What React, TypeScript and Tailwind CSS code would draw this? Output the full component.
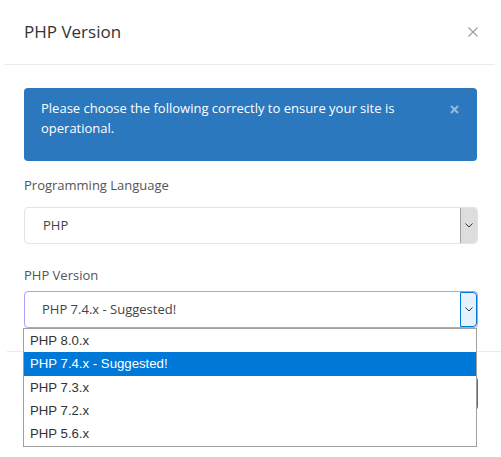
import React from "react";

const VERSIONS = ["PHP 8.0.x", "PHP 7.4.x - Suggested!", "PHP 7.3.x", "PHP 7.2.x", "PHP 5.6.x"];

function Chevron() {
  return (
    <svg width="8" height="5" viewBox="0 0 8 5" fill="none">
      <path d="M0.5 0.5 L4 4 L7.5 0.5" stroke="#333" strokeWidth="1" />
    </svg>
  );
}

export default function App() {
  return (
    <div className="relative h-[457px] w-[501px] overflow-hidden bg-white font-['Open_Sans',sans-serif]">
      <header className="ml-1 mr-[6px] flex h-[65px] items-center justify-between border-b border-[#e9ecef] pl-5 pr-[17px]">
        <h2 className="text-[17px] leading-[24px] text-[#333]">PHP Version</h2>
        <button type="button" className="flex h-[10px] w-[10px] items-center justify-center">
          <svg width="10" height="10" viewBox="0 0 10 10">
            <path d="M0.5 0.5 L9.5 9.5 M9.5 0.5 L0.5 9.5" stroke="#a0a0a0" strokeWidth="1.2" />
          </svg>
        </button>
      </header>

      <div className="px-6 pt-[23px]">
        <div className="flex h-[73px] items-start rounded-[4px] bg-[#2b78be] pl-[17px] pr-[18px] pt-[10px] text-[13px] leading-[20px] text-white">
          <p className="flex-1 pr-[30px]">
            Please choose the following correctly to ensure your site is operational.
          </p>
          <button type="button" className="mt-[7px] flex h-[9px] w-[9px] items-center justify-center">
            <svg width="9" height="9" viewBox="0 0 9 9">
              <path d="M1 1 L8 8 M8 1 L1 8" stroke="#95bbdf" strokeWidth="2" />
            </svg>
          </button>
        </div>

        <label className="mt-[14px] block text-[13px] leading-[20px] text-[#555]">Programming Language</label>
        <div className="mt-3 flex h-[37px] w-[454px] items-stretch rounded-[4px] border border-[#e3e3e3]">
          <span className="flex flex-1 items-center pl-[18px] text-[13px] text-[#444]">PHP</span>
          <span className="flex w-[17px] items-center justify-center rounded-r-[4px] border-l border-[#a0a0a0] bg-[#dddddd]">
            <Chevron />
          </span>
        </div>

        <label className="mt-[21px] block text-[13px] leading-[20px] text-[#555]">PHP Version</label>
        <div className="mt-[6px] flex h-[37px] w-[454px] items-stretch rounded-[4px] border border-[#b49afa]">
          <span className="flex flex-1 items-center pl-[17px] text-[13px] text-[#444]">PHP 7.4.x - Suggested!</span>
          <span className="flex w-[17px] items-center justify-center rounded-r-[4px] border border-[#0078d7] bg-[#e5f1fb]">
            <Chevron />
          </span>
        </div>
      </div>

      <footer className="ml-[7px] mt-[23px] flex justify-end border-t border-[#e9ecef] pr-[23px] pt-[25px]">
        <button type="button" className="h-[33px] rounded-[4px] bg-[#2b78be] px-4 text-[13px] text-white">
          Save
        </button>
      </footer>

      <ul className="absolute left-[23px] top-[328px] w-[454px] border border-[#a0a0a0] bg-white py-0 font-['Liberation_Sans',Arial,sans-serif] text-[13.2px] text-[#333]">
        {VERSIONS.map((v, i) => (
          <li
            key={v}
            className={
              i === 1
                ? "flex h-[23.4px] items-center bg-[#0078d7] pl-[6px] text-white"
                : "flex h-[23.4px] items-center pl-[6px]"
            }
          >
            {v}
          </li>
        ))}
      </ul>
    </div>
  );
}
